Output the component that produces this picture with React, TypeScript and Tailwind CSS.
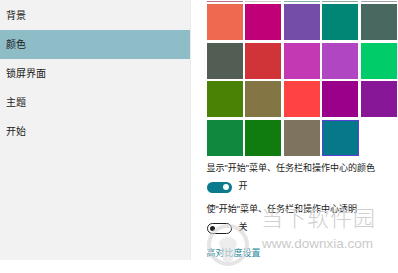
import React from "react";

const rows: string[][] = [
  ["#ef6950", "#bf0077", "#744da9", "#018574", "#486860"],
  ["#525e54", "#d13438", "#c239b3", "#b146c2", "#00cc6a"],
  ["#498205", "#847545", "#ff4343", "#9a0089", "#881798"],
  ["#10893e", "#107c10", "#7e735f", "#05788a", ""],
];

const sliver = ["#b8708a", "#d0c8cc", "#80b0a8", "#90aca4", "#a0a8a8"];

const nav = ["背景", "颜色", "锁屏界面", "主题", "开始"];

export default function App() {
  const font = { fontFamily: '"Liberation Sans", "Noto Sans CJK SC", sans-serif' };
  return (
    <div className="relative w-[398px] h-[273px] bg-white overflow-hidden flex items-start" style={font}>
      <div className="w-[191px] h-[260px] bg-[#f2f2f2] border-r border-[#ebebeb] flex flex-col pt-[1px]">
        {nav.map((n, i) => (
          <div
            key={n}
            className={`h-[29px] flex items-center pl-[6px] text-[10px] text-[#1a1a1a] ${i === 1 ? "bg-[#8fbdc7]" : ""}`}
          >
            {n}
          </div>
        ))}
      </div>
      <div className="flex-1 pl-[15.5px] flex flex-col">
        <div className="mt-[1px] flex gap-x-[2.5px]">
          {sliver.map((c, i) => (
            <div key={i} className="w-[36px] h-[1px]" style={{ backgroundColor: c }} />
          ))}
        </div>
        <div className="mt-[2px] flex flex-col gap-y-[2.5px]">
          {rows.map((r, ri) => (
            <div key={ri} className="flex gap-x-[2.5px]">
              {r.map((c, ci) =>
                c === "" ? (
                  <div key={ci} className="w-[36px] h-[36px]" />
                ) : ri === 3 && ci === 3 ? (
                  <div
                    key={ci}
                    className="w-[37px] h-[36px] border-[1.5px] border-[#5b3fd6]"
                    style={{ backgroundColor: c }}
                  />
                ) : (
                  <div key={ci} className="w-[36px] h-[36px]" style={{ backgroundColor: c }} />
                )
              )}
            </div>
          ))}
        </div>
        <div className="mt-[6.5px] h-[14px] flex items-center text-[9px] text-[#1a1a1a] whitespace-nowrap">
          显示"开始"菜单、任务栏和操作中心的颜色
        </div>
        <div className="mt-[5px] h-[12px] flex items-center gap-[7px]">
          <div className="w-[25px] h-[11px] rounded-full bg-[#0b7a8c] flex items-center justify-end pr-[3px]">
            <div className="w-[6px] h-[6px] rounded-full bg-white" />
          </div>
          <span className="text-[9px] text-[#1a1a1a]">开</span>
        </div>
        <div className="mt-[10px] h-[14px] flex items-center text-[9px] text-[#1a1a1a] whitespace-nowrap">
          使"开始"菜单、任务栏和操作中心透明
        </div>
        <div className="mt-[5px] h-[12px] flex items-center gap-[7px]">
          <div className="w-[25px] h-[11px] rounded-full border-[1.5px] border-[#222] flex items-center pl-[2px]">
            <div className="w-[5px] h-[5px] rounded-full bg-[#222]" />
          </div>
          <span className="text-[9px] text-[#1a1a1a]">关</span>
        </div>
        <div className="mt-[13px] h-[14px] flex items-center text-[9px] text-[#2b8a9c]">高对比度设置</div>
      </div>

      <div className="absolute left-[205px] top-[222px] pointer-events-none opacity-60">
        <svg width="46" height="46" viewBox="0 0 46 46">
          <circle cx="23" cy="23" r="19" fill="none" stroke="#d4d4d4" strokeWidth="4" />
          <path d="M14 20 Q23 10 32 20 L28 38 Q23 42 18 38 Z" fill="#e2e2e2" />
        </svg>
      </div>
      <div className="absolute left-[261px] top-[207px] text-[22px] leading-[24px] tracking-[1px] text-[#d0d0d0] pointer-events-none whitespace-nowrap font-light">
        当下软件园
      </div>
      <div className="absolute left-[262px] top-[236px] text-[13.5px] leading-[16px] text-[#cacaca] pointer-events-none whitespace-nowrap">
        www.downxia.com
      </div>
    </div>
  );
}
